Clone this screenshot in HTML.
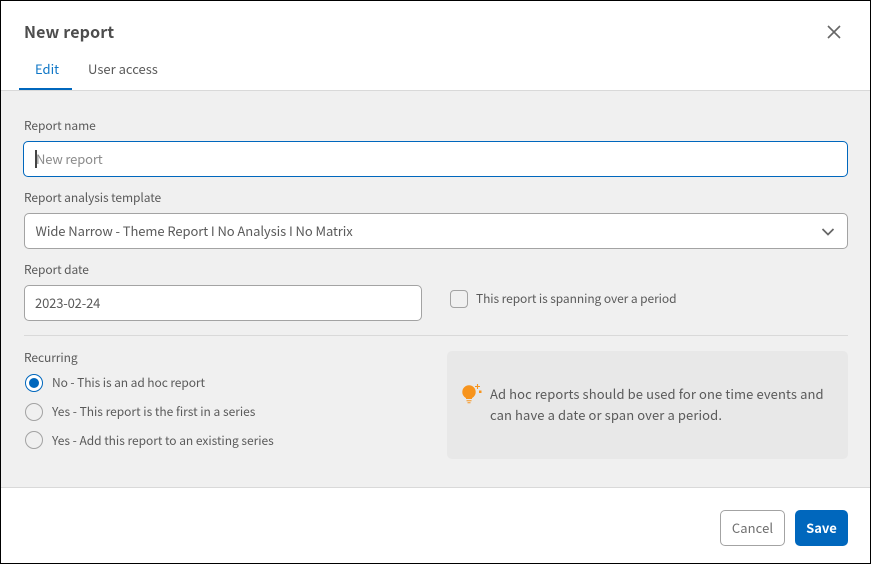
<!DOCTYPE html>
<html><head><meta charset="utf-8"><style>
html,body{margin:0;padding:0;background:#fff}
body{width:871px;height:564px;position:relative;overflow:hidden;font-family:"Noto Sans CJK JP","Liberation Sans",sans-serif;color:#5a5a5a;font-size:12px;letter-spacing:-0.08px}
.a{position:absolute;white-space:nowrap}
.t{line-height:18px;height:18px}
.m{font-size:13px;letter-spacing:-0.08px}
.box{position:absolute;box-sizing:border-box;background:#fff;border:1px solid #a3a3a3;border-radius:5px}
.radio{position:absolute;box-sizing:border-box;width:18px;height:18px;border-radius:50%;border:1px solid #a3a3a3;background:#f0f0f0;left:25px}
</style></head><body>
<div class="a" style="left:1px;top:91px;width:869px;height:397px;background:#f0f0f0"></div>
<div class="a" style="left:1px;top:90px;width:869px;height:1px;background:#d9d9d9"></div>
<div class="a" style="left:1px;top:487px;width:869px;height:1px;background:#d9d9d9"></div>
<div class="a t" style="left:24px;top:22px;font-size:16px;letter-spacing:.15px;font-weight:700;line-height:18px;color:#4d4d4d">New report</div>
<svg class="a" style="left:826px;top:24px" width="16" height="16" viewBox="0 0 16 16"><path d="M2 2L14 14M14 2L2 14" stroke="#666" stroke-width="1.6" fill="none"/></svg>
<div class="a t m" style="left:35px;top:60px;letter-spacing:0;color:#0f76c6">Edit</div>
<div class="a t m" style="left:88px;top:60px;letter-spacing:0">User access</div>
<div class="a" style="left:19px;top:88px;width:53px;height:2px;background:#0067bd"></div>
<div class="a t" style="left:24px;top:117px">Report name</div>
<div class="box" style="left:23px;top:141px;width:825px;height:36px;border-color:#0067bd"></div>
<div class="a" style="left:35px;top:150px;width:2px;height:18px;background:#444"></div>
<div class="a t m" style="left:36px;top:150px;color:#8c8c8c;letter-spacing:-.15px">New report</div>
<div class="a t" style="left:24px;top:189px">Report analysis template</div>
<div class="box" style="left:24px;top:213px;width:824px;height:36px"></div>
<div class="a t m" style="left:35.500px;top:222px">Wide Narrow - Theme Report I No Analysis I No Matrix</div>
<svg class="a" style="left:821px;top:227px" width="14" height="10" viewBox="0 0 14 10"><path d="M1.500 2L7 7.500L12.500 2" stroke="#666" stroke-width="1.700" fill="none"/></svg>
<div class="a t" style="left:24px;top:261px">Report date</div>
<div class="box" style="left:24px;top:285px;width:398px;height:36px"></div>
<div class="a t m" style="left:35px;top:294px;letter-spacing:-.15px">2023-02-24</div>
<div class="a" style="left:450px;top:290px;width:18px;height:18px;box-sizing:border-box;border:1px solid #a3a3a3;border-radius:4px"></div>
<div class="a t" style="left:476px;top:290px">This report is spanning over a period</div>
<div class="a" style="left:24px;top:335px;width:824px;height:1px;background:#d9d9d9"></div>
<div class="a t" style="left:24px;top:349px">Recurring</div>
<div class="radio" style="top:374px;border:1px solid #0067bd;background:#fff"></div>
<div class="a" style="left:29px;top:378px;width:10px;height:10px;border-radius:50%;background:#0067bd"></div>
<div class="a t" style="left:52px;top:374px">No - This is an ad hoc report</div>
<div class="radio" style="top:403px"></div>
<div class="a t" style="left:52px;top:403px;letter-spacing:-.01px">Yes - This report is the first in a series</div>
<div class="radio" style="top:431px"></div>
<div class="a t" style="left:52px;top:432px;letter-spacing:-.03px">Yes - Add this report to an existing series</div>
<div class="a" style="left:447px;top:351px;width:401px;height:108px;background:#e8e8e8;border-radius:5px"></div>
<svg class="a" style="left:460px;top:382px" width="24" height="24" viewBox="0 0 24 24"><circle cx="9" cy="10" r="6.700" fill="#f7941d"/><path d="M6 14h6v3H6z" fill="#f7941d"/><path d="M6.500 18.200h5v1.100h-5zM7.500 20.200h3v1.100h-3z" fill="#f7941d"/><path d="M17.500 2v5M15 4.500h5" stroke="#f7941d" stroke-width="1.100"/><rect x="19" y="8.500" width="2.500" height="2.500" fill="#f7941d"/></svg>
<div class="a" style="left:490px;top:383px;font-size:13px;letter-spacing:.1px;line-height:21px">Ad hoc reports should be used for one time events and<br>can have a date or span over a period.</div>
<div class="a" style="left:720px;top:510px;width:65px;height:36px;box-sizing:border-box;border:1px solid #a3a3a3;border-radius:5px;text-align:center;font-size:13px;letter-spacing:.1px;line-height:34px;color:#6e6e6e">Cancel</div>
<div class="a" style="left:795px;top:510px;width:53px;height:36px;background:#0067bd;border-radius:5px;text-align:center;font-size:13px;letter-spacing:0;font-weight:700;line-height:36px;color:#fff">Save</div>
<div class="a" style="left:0;top:0;width:871px;height:564px;box-sizing:border-box;border:1px solid #000"></div>
</body></html>
